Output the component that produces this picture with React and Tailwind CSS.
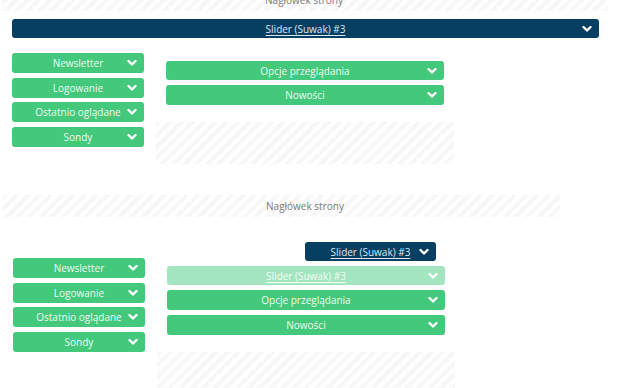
import React from "react";

const hatch =
  "bg-[repeating-linear-gradient(135deg,#f7f7f7_0px,#f7f7f7_4px,#fefefe_4px,#fefefe_8px)]";

const Chevron = ({ className = "" }) => (
  <svg
    viewBox="0 0 10 7"
    className={`absolute right-[7px] top-1/2 -translate-y-1/2 w-[10px] h-[7px] ${className}`}
  >
    <path
      d="M1.5 1.5 L5 5 L8.5 1.5"
      fill="none"
      stroke="currentColor"
      strokeWidth="2.4"
      strokeLinecap="round"
      strokeLinejoin="round"
    />
  </svg>
);

const Bar = ({ label, variant = "green", underline = false, className = "" }) => {
  const colors = {
    green: "bg-[#44c97c] text-[#eefaf2]",
    light: "bg-[#a3e5bf] text-[#f4fcf7]",
    dark: "bg-[#073f63] text-[#dbe8f1]",
  };
  return (
    <div
      className={`relative flex items-center justify-center rounded-[3px] text-[10px] leading-none ${colors[variant]} ${className}`}
    >
      <span className={underline ? "underline underline-offset-2" : ""}>{label}</span>
      <Chevron className="text-white" />
    </div>
  );
};

const SideColumn = ({ className = "" }) => (
  <div className={`flex flex-col gap-[4.5px] w-[132px] ${className}`}>
    {["Newsletter", "Logowanie", "Ostatnio oglądane", "Sondy"].map((item) => (
      <Bar key={item} label={item} className="h-[20px]" />
    ))}
  </div>
);

// page header strip; the label is centred on the page content, not the strip
const Header = ({ className = "" }) => (
  <div className={`h-[22px] flex items-center ${hatch} ${className}`}>
    <div className="w-[604px] shrink-0 flex justify-center text-[10px] text-[#7a7a7a]">
      Nagłówek strony
    </div>
  </div>
);

export default function App() {
  return (
    <div className="w-[624px] h-[388px] overflow-hidden bg-white font-['Open_Sans','Noto_Sans',sans-serif]">
      {/* section 1 */}
      <Header className="-mt-[11px] ml-[2px] w-[606px]" />
      <Bar
        label="Slider (Suwak) #3"
        variant="dark"
        underline
        className="mt-[8px] ml-[12px] w-[587px] h-[19px]"
      />
      <div className="flex items-start mt-[15px]">
        <SideColumn className="ml-[12px]" />
        <div className="ml-[12px] w-[298px] mt-[8px] px-[10px] flex flex-col gap-[5px]">
          <Bar label="Opcje przeglądania" className="h-[19px]" />
          <Bar label="Nowości" className="h-[20px]" />
          <div className={`-mx-[10px] mt-[12px] h-[42px] ${hatch}`} />
        </div>
      </div>

      {/* section 2 */}
      <Header className="mt-[31px] ml-[3px] w-[557px]" />
      <div className="flex items-start mt-[25px]">
        <SideColumn className="ml-[13px] mt-[16px]" />
        <div className="ml-[12px] w-[298px] px-[10px] flex flex-col gap-[5px]">
          <Bar
            label="Slider (Suwak) #3"
            variant="dark"
            underline
            className="self-end mr-[9px] w-[131px] h-[19px]"
          />
          <Bar label="Slider (Suwak) #3" variant="light" underline className="h-[19px]" />
          <Bar label="Opcje przeglądania" className="h-[20px]" />
          <Bar label="Nowości" className="h-[20px]" />
          <div className={`-mx-[10px] mt-[12px] h-[60px] ${hatch}`} />
        </div>
      </div>
    </div>
  );
}
